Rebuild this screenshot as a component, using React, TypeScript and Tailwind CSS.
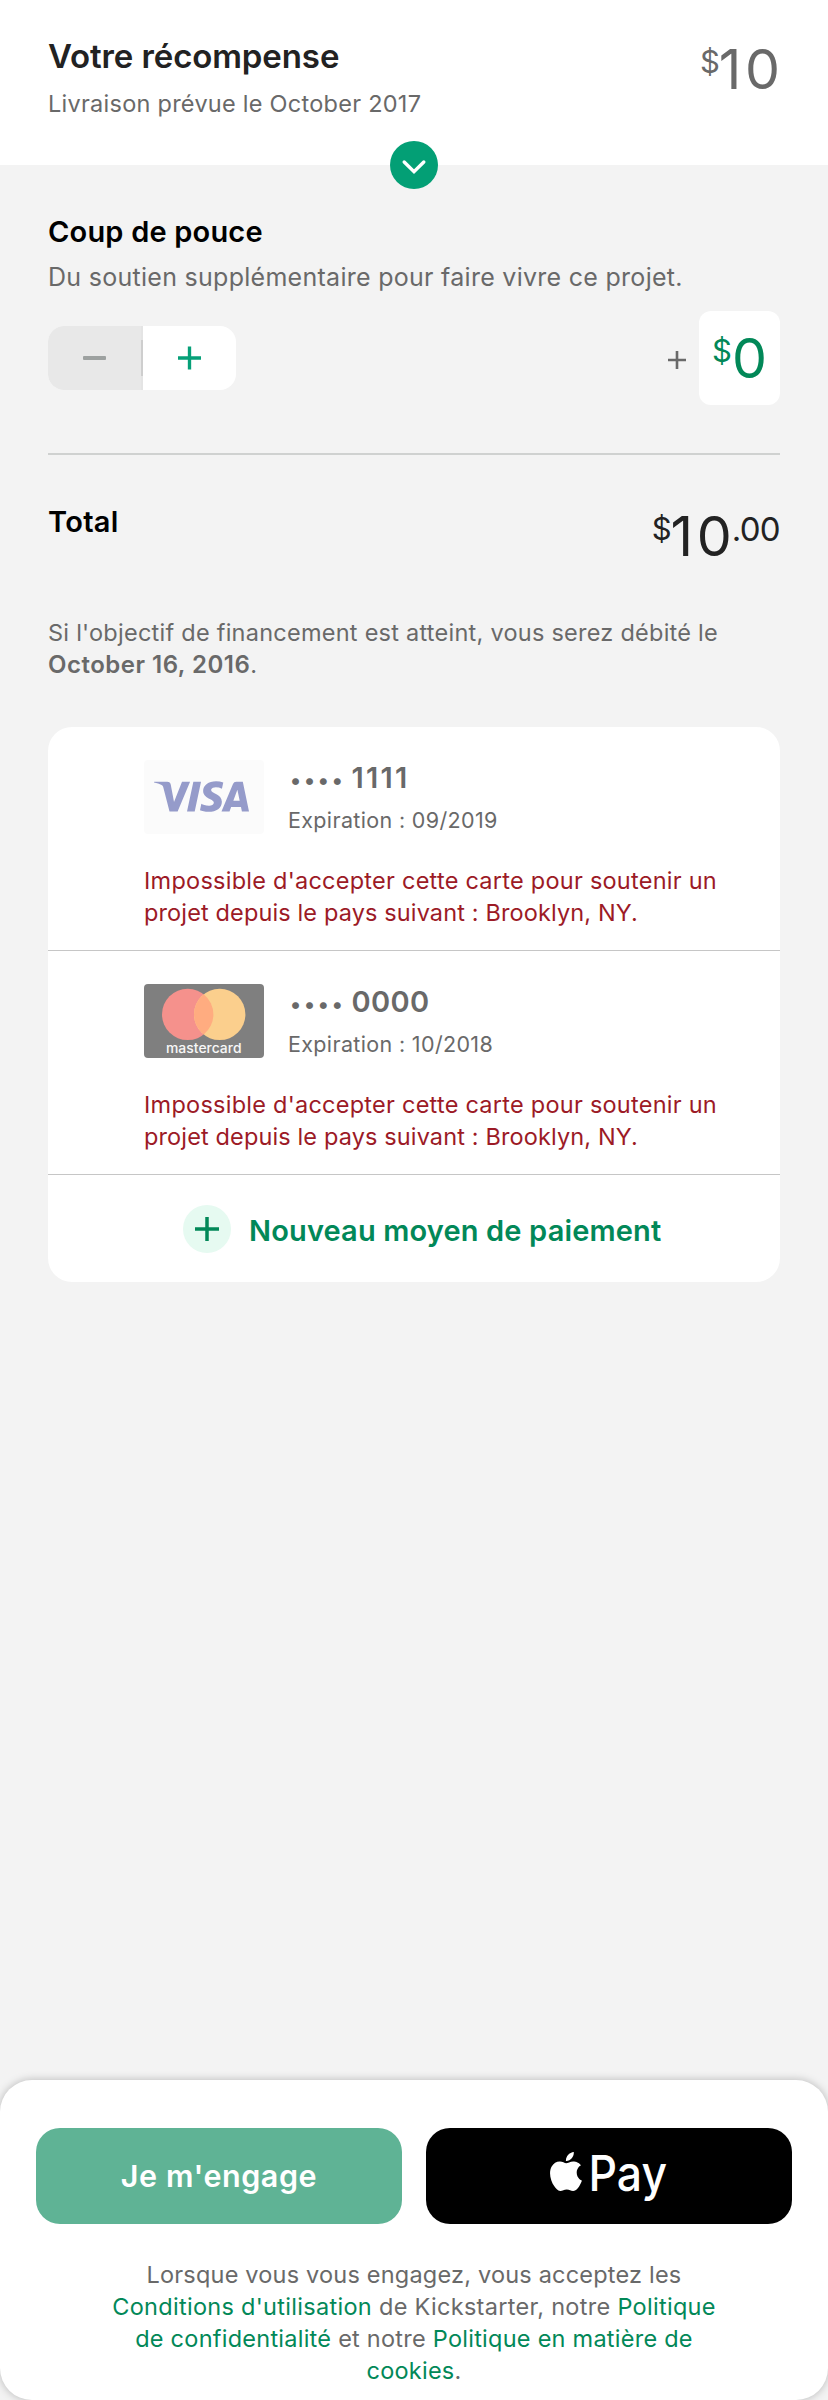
import type { ReactNode } from "react";
import { SiVisa } from "react-icons/si";

function Amount({ whole, cents }: { whole: string; cents?: string }) {
  return (
    <div className="flex items-start">
      <span className="mt-[5px] -mr-px text-[31px] leading-[32px]">$</span>
      <span className={whole.length > 1 ? "-mr-[3.6px] text-[55.5px] leading-[56px] tracking-[3.6px]" : "ml-[1px] text-[55.5px] leading-[56px]"}>{whole}</span>
      {cents && <span className="mt-[4px] text-[33px] leading-[34px] tracking-[-0.7px]">{cents}</span>}
    </div>
  );
}

function Plus({ className }: { className: string }) {
  return (
    <svg viewBox="0 0 24 24" className={className} stroke="currentColor" strokeWidth="3.5" fill="none">
      <path d="M12 0V24M0 12H24" />
    </svg>
  );
}

function VisaLogo() {
  return (
    <div className="flex h-[74px] w-[120px] shrink-0 items-center justify-center overflow-hidden rounded-[4px] bg-[#fbfbfb] pr-[6px] pb-[2px]">
      <SiVisa className="h-[95px] w-[95px] shrink-0 text-[#959bca]" />
    </div>
  );
}

function MastercardLogo() {
  return (
    <svg viewBox="0 0 120 74" className="h-[74px] w-[120px] shrink-0">
      <rect width="120" height="74" rx="4" fill="#7f7f7f" />
      <circle cx="43.7" cy="30.4" r="25.7" fill="#f5918c" />
      <circle cx="75.7" cy="30.4" r="25.7" fill="#fbcf8d" />
      <path d="M59.7 10.3A25.7 25.7 0 0 1 59.7 50.5A25.7 25.7 0 0 1 59.7 10.3Z" fill="#ffac80" />
      <text x="22" y="69" textLength="75.5" lengthAdjust="spacingAndGlyphs" fontSize="13.5" className="fill-[#f7f7f7] font-['Inter',sans-serif] font-medium">
        mastercard
      </text>
    </svg>
  );
}

function CardRow({ logo, digits, expiration }: { logo: ReactNode; digits: ReactNode; expiration: string }) {
  return (
    <div className="h-[224px] border-b border-[#c6c6c6] pt-[33px] pl-24">
      <div className="flex h-[74px] gap-6">
        {logo}
        <div className="text-[#696969]">
          <div className="flex h-[35px] items-baseline pl-[2px] text-[29px] leading-[35px] font-semibold">
            <span className="mr-[6px] text-[22px] leading-none tracking-[2.8px]">••••</span>
            {digits}
          </div>
          <p className="mt-[11px] text-[21.5px] leading-[28px] tracking-[0.35px]">{expiration}</p>
        </div>
      </div>
      <p className="mt-[31px] text-[23.5px] leading-[32px] whitespace-nowrap text-[#9c1a26]">
        <span className="block tracking-[0.25px]">Impossible d'accepter cette carte pour soutenir un</span>
        <span className="block tracking-[0.13px]">projet depuis le pays suivant : Brooklyn, NY.</span>
      </p>
    </div>
  );
}

export default function App() {
  return (
    <div className="flex h-[2400px] w-[828px] flex-col bg-[#f3f3f3] font-['Inter',sans-serif]">
      <header className="relative flex h-[165px] justify-between bg-white px-12 pt-9">
        <div>
          <h1 className="text-[33px] leading-[40px] font-semibold tracking-[-0.1px] text-[#222222]">Votre récompense</h1>
          <p className="mt-[12px] text-[23.5px] leading-[32px] tracking-[0.26px] text-[#696969]">Livraison prévue le October 2017</p>
        </div>
        <div className="mt-[5px] text-[#696969]">
          <Amount whole="10" />
        </div>
        <div className="absolute -bottom-6 left-[390px] flex size-12 items-center justify-center rounded-full bg-[#039f75]">
          <svg viewBox="0 0 48 48" className="size-12" fill="none" stroke="white" strokeWidth="3.4" strokeLinecap="round" strokeLinejoin="miter">
            <path d="M14.2 21L24 30.6L33.8 21" />
          </svg>
        </div>
      </header>

      <main className="flex-1 px-12 pt-12">
        <h2 className="text-[29px] leading-[37px] font-semibold tracking-[0.19px] text-black">Coup de pouce</h2>
        <p className="mt-[11px] text-[25px] leading-[32px] tracking-[0.28px] text-[#696969]">Du soutien supplémentaire pour faire vivre ce projet.</p>

        <div className="mt-[18px] flex h-[94px] items-center justify-between">
          <div className="flex h-16 w-[188px] overflow-hidden rounded-[16px] bg-white">
            <div className="flex w-[93px] items-center justify-center bg-[#e8e8e8]">
              <div className="h-[4px] w-[23px] rounded-[1px] bg-[#9da1a0]" />
            </div>
            <div className="flex w-[2px] items-center bg-[#e4e4e4]">
              <div className="h-[36px] w-[2px] bg-[#cecece]" />
            </div>
            <div className="flex flex-1 items-center justify-center text-[#06a078]">
              <Plus className="h-6 w-[23px]" />
            </div>
          </div>
          <div className="flex items-center">
            <Plus className="mt-1 mr-[13px] size-[18px] text-[#696969]" />
            <div className="flex h-[94px] w-[81px] rounded-[12px] bg-white pt-[19px] pl-[13px] text-[#028858]">
              <Amount whole="0" />
            </div>
          </div>
        </div>

        <div className="mt-12 h-[2px] bg-[#cfd1d0]" />

        <div className="mt-12 flex h-[61px] justify-between">
          <h2 className="text-[29px] leading-[37px] font-semibold tracking-[0.3px] text-black">Total</h2>
          <div className="mt-[5px] text-[#222222]">
            <Amount whole="10" cents=".00" />
          </div>
        </div>

        <p className="mt-[53px] text-[23.5px] leading-[32px] tracking-[0.25px] text-[#696969]">
          Si l'objectif de financement est atteint, vous serez débité le
          <br />
          <b className="text-[24px] font-semibold tracking-[0.5px]">October 16, 2016</b>.
        </p>

        <section className="mt-[46px] h-[555px] rounded-[24px] bg-white">
          <CardRow logo={<VisaLogo />} digits={<span className="tracking-[2.2px]">1111</span>} expiration="Expiration : 09/2019" />
          <CardRow logo={<MastercardLogo />} digits={<span className="tracking-[0.4px]">0000</span>} expiration="Expiration : 10/2018" />
          <div className="flex pt-[30px] pl-[135px] text-[#028858]">
            <div className="flex size-12 items-center justify-center rounded-full bg-[#e6faf1]">
              <Plus className="size-6" />
            </div>
            <span className="mt-[7px] ml-[18px] text-[29px] leading-[37px] font-semibold tracking-[0.15px]">Nouveau moyen de paiement</span>
          </div>
        </section>
      </main>

      <footer className="h-80 rounded-[32px] bg-white px-9 pt-12 shadow-[0_0_8px_rgba(0,0,0,0.25)]">
        <div className="grid grid-cols-2 gap-6">
          <button className="h-24 rounded-[24px] bg-[#5fb395] text-[30.5px] leading-[36px] font-semibold tracking-[0.55px] text-white">Je m'engage</button>
          <button className="flex h-24 items-start rounded-[24px] bg-black pt-6 pl-[124px]">
            <svg viewBox="0 0 120 52" className="h-[52px] w-[120px] shrink-0 overflow-visible" fill="white">
              <svg x="0" y="0" width="32" height="39" viewBox="2.2 0 19.6 24" preserveAspectRatio="none">
                <path d="M12.152 6.896c-.948 0-2.415-1.078-3.96-1.04-2.04.027-3.91 1.183-4.961 3.014-2.117 3.675-.546 9.103 1.519 12.09 1.013 1.454 2.208 3.09 3.792 3.039 1.52-.065 2.09-.987 3.935-.987 1.831 0 2.35.987 3.96.948 1.637-.026 2.676-1.48 3.676-2.948 1.156-1.688 1.636-3.325 1.662-3.415-.039-.013-3.182-1.221-3.22-4.857-.026-3.04 2.48-4.494 2.597-4.559-1.429-2.09-3.623-2.324-4.39-2.376-2-.156-3.675 1.09-4.61 1.09zM15.53 3.83c.843-1.012 1.4-2.427 1.245-3.83-1.207.052-2.662.805-3.532 1.818-.78.896-1.454 2.338-1.273 3.714 1.338.104 2.715-.688 3.559-1.701" />
              </svg>
              <text x="38.5" y="38.6" fontSize="49" textLength="78.5" lengthAdjust="spacingAndGlyphs" className="font-['Inter',sans-serif] font-medium">
                Pay
              </text>
            </svg>
          </button>
        </div>
        <p className="mt-[35px] text-center text-[23.5px] leading-[32px] whitespace-nowrap text-[#696969]">
          <span className="block tracking-[0.2px]">Lorsque vous vous engagez, vous acceptez les</span>
          <span className="block tracking-[0.3px]">
            <a className="text-[#028858]">Conditions d'utilisation</a> de Kickstarter, notre <a className="text-[#028858]">Politique</a>
          </span>
          <span className="block tracking-[0.25px]">
            <a className="text-[#028858]">de confidentialité</a> et notre <a className="text-[#028858]">Politique en matière de</a>
          </span>
          <span className="block tracking-[0.25px]">
            <a className="text-[#028858]">cookies</a>.
          </span>
        </p>
      </footer>
    </div>
  );
}
